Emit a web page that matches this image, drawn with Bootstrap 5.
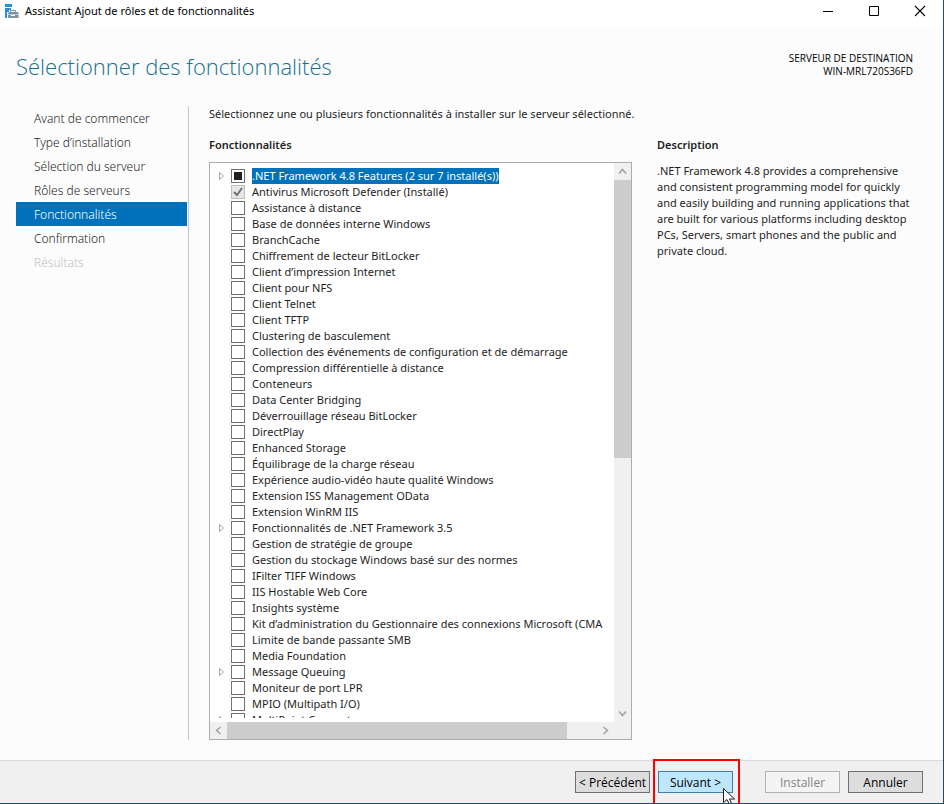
<!DOCTYPE html>
<html lang="fr">
<head>
<meta charset="utf-8">
<meta name="viewport" content="width=device-width, initial-scale=1">
<title>Assistant Ajout de rôles et de fonctionnalités</title>
<link href="https://cdn.jsdelivr.net/npm/bootstrap@5.3.0/dist/css/bootstrap.min.css" rel="stylesheet">
<style>
body { font-family: "Noto Sans", "Open Sans", sans-serif; font-size: 11px; line-height: 16px; color: #1e1e1e; }
.wizard { background: #fcfcfc; border-right: 1px solid #1f4e66; border-bottom: 1px solid #1f4e66; }
.titlebar { height: 27px; background: #fff; color: #000; padding: 0 0 5px 4px; gap: 6px; }
.caption-btn { width: 46px; height: 22px; border: 0; background: none; padding: 0; color: #000; display: grid; place-items: center; }
.page-head { padding: 23px 30px 0 16px; height: 79px; }
.page-title { font-family: "Open Sans", sans-serif; font-size: 22px; line-height: 32px; font-weight: 300; color: #16708f; margin: 0; }
.server-info { font-family: "Open Sans", sans-serif; font-size: 10px; line-height: 13px; color: #000; padding-top: 2px; }
.steps { width: 173px; margin-left: 16px; border-right: 1px solid #c8c8c8; padding: 0 1px 0 0; }
.steps .nav-link { font-size: 12px; line-height: 22px; font-weight: 300; color: #1e1e1e; padding: 2px 0 0 18px; border-radius: 0; }
.steps .nav-link.active { background: #0072bc; color: #fff; }
.steps .nav-link.disabled { color: #bfbfbf; }
.picker { padding: 0 0 0 20px; }
.section-row { padding-top: 15px; }
.section-title { font-size: 11px; line-height: 16px; font-weight: 600; margin: 0 0 9px; }
.side { width: 311px; padding: 0 24px 0 25px; }
.desc-text { padding-top: 1px; }
.tree-box { background: #fff; border: 1px solid #acacac; }
.tree-pane { padding: 5px 0 4px 8px; }
.feature { height: 16px; }
.twist { width: 7px; height: 16px; margin-right: 6px; padding: 0; border: 0; background: none; }
.twist svg { display: block; }
.tick { appearance: none; width: 14px; height: 14px; flex: none; margin: 0 7px 0 0; border: 1px solid #707070; background: #fff; }
.tick:indeterminate { background: linear-gradient(#212121, #212121) center / 8px 8px no-repeat #fff; }
.tick:disabled { border-color: #bcbcbc; background: #e6e6e6 url("data:image/svg+xml,%3Csvg xmlns='http://www.w3.org/2000/svg' viewBox='0 0 12 12'%3E%3Cpath d='M2 6l3 3 5-7' fill='none' stroke='%23707070' stroke-width='2'/%3E%3C/svg%3E") center no-repeat; }
.feature-name { white-space: nowrap; line-height: 16px; }
.feature-name.picked { background: #0072bc; color: #fff; }
.v-bar { width: 17px; background: #f0f0f0; }
.h-bar { height: 17px; background: #f0f0f0; }
.thumb { background: #cdcdcd; }
.bar-btn { width: 17px; height: 17px; flex: none; border: 0; padding: 0; background: #f0f0f0; display: grid; place-items: center; }
.v-thumb { height: 53%; }
.h-thumb { width: 92%; }
.actions { background: #f0f0f0; border-top: 1px solid #dadada; height: 43px; padding: 10px 20px 0 0; margin-top: 20px; }
.wiz-btn { font-family: "Open Sans", sans-serif; width: 75px; height: 22px; font-size: 12px; line-height: 16px; padding: 2px 0 0; border: 1px solid #707070; border-radius: 0; background: #ddd; color: #000; white-space: nowrap; }
.wiz-btn.hot { background: #bee6fd; border-color: #3c7fb1; }
.wiz-btn:disabled { background: #f4f4f4; border-color: #adb2b5; color: #838383; opacity: 1; }
.end-group { margin-left: 32px; }
.focus-frame { position: absolute; inset: -12px -7px -10px -5px; border: 2px solid #f00; pointer-events: none; }
.pointer { position: absolute; left: 64px; top: 17px; pointer-events: none; }
</style>
<script src="https://cdn.jsdelivr.net/npm/bootstrap@5.3.0/dist/js/bootstrap.bundle.min.js"></script>
</head>
<body>
<div class="wizard vh-100 d-flex flex-column overflow-hidden">
  <header class="titlebar d-flex align-items-center flex-shrink-0">
    <svg width="15" height="15" viewBox="0 0 15 15" aria-hidden="true">
      <path d="M1 0h7v3H1zM1 4h6v2H5v2H3v6H1z" fill="#2b8dd8"/>
      <path d="M6.500 8.500v-2h5v2" fill="none" stroke="#7893a8"/>
      <path d="M5 8h9l1 2.500H3.500z" fill="#7893a8"/>
      <path d="M4 11h3v1h4v-1h3.500v3H4z" fill="#7893a8"/>
    </svg>
    <span class="flex-grow-1">Assistant Ajout de rôles et de fonctionnalités</span>
    <div class="d-flex">
      <button class="caption-btn" type="button" aria-label="Réduire"><svg width="12" height="12"><path d="M1 6.500h10" stroke="#000"/></svg></button>
      <button class="caption-btn" type="button" aria-label="Agrandir"><svg width="12" height="12"><path d="M1.500 1.500h9v9h-9z" fill="none" stroke="#000"/></svg></button>
      <button class="caption-btn" type="button" aria-label="Fermer"><svg width="12" height="12"><path d="M1 1l10 10M11 1L1 11" stroke="#000" stroke-width="1.100"/></svg></button>
    </div>
  </header>
  <div class="page-head d-flex justify-content-between flex-shrink-0">
    <h1 class="page-title">Sélectionner des fonctionnalités</h1>
    <div class="server-info text-end">SERVEUR DE DESTINATION<br>WIN-MRL720S36FD</div>
  </div>
  <main class="d-flex flex-fill overflow-hidden">
    <nav class="steps nav flex-column flex-nowrap flex-shrink-0" aria-label="Étapes">
      <a class="nav-link" href="#">Avant de commencer</a>
      <a class="nav-link" href="#">Type d’installation</a>
      <a class="nav-link" href="#">Sélection du serveur</a>
      <a class="nav-link" href="#">Rôles de serveurs</a>
      <a class="nav-link active" href="#" aria-current="step">Fonctionnalités</a>
      <a class="nav-link" href="#">Confirmation</a>
      <a class="nav-link disabled" href="#" aria-disabled="true">Résultats</a>
    </nav>
    <div class="d-flex flex-column flex-fill overflow-hidden">
      <p class="picker text-nowrap mb-0">Sélectionnez une ou plusieurs fonctionnalités à installer sur le serveur sélectionné.</p>
      <div class="section-row d-flex flex-fill overflow-hidden">
        <section class="picker d-flex flex-column flex-fill overflow-hidden">
          <h2 class="section-title">Fonctionnalités</h2>
          <div class="tree-box d-flex flex-column flex-fill overflow-hidden">
            <div class="d-flex flex-fill overflow-hidden">
              <div class="tree-pane flex-fill overflow-hidden">
                <div class="h-100 overflow-hidden" id="features"></div>
              </div>
              <div class="v-bar d-flex flex-column flex-shrink-0">
                <button class="bar-btn" type="button" aria-label="Défiler vers le haut"><svg width="9" height="9"><path d="M1 6.500L4.500 2.500 8 6.500" fill="none" stroke="#a0a0a0" stroke-width="1.500"/></svg></button>
                <div class="flex-fill"><div class="thumb v-thumb"></div></div>
                <button class="bar-btn" type="button" aria-label="Défiler vers le bas"><svg width="9" height="9"><path d="M1 2.500L4.500 6.500 8 2.500" fill="none" stroke="#a0a0a0" stroke-width="1.500"/></svg></button>
              </div>
            </div>
            <div class="h-bar d-flex flex-shrink-0">
              <button class="bar-btn" type="button" aria-label="Défiler vers la gauche"><svg width="9" height="9"><path d="M6.500 1L2.500 4.500 6.500 8" fill="none" stroke="#a0a0a0" stroke-width="1.500"/></svg></button>
              <div class="flex-fill"><div class="thumb h-thumb h-100"></div></div>
              <button class="bar-btn" type="button" aria-label="Défiler vers la droite"><svg width="9" height="9"><path d="M2.500 1L6.500 4.500 2.500 8" fill="none" stroke="#a0a0a0" stroke-width="1.500"/></svg></button>
              <div class="v-bar"></div>
            </div>
          </div>
        </section>
        <aside class="side flex-shrink-0">
          <h2 class="section-title">Description</h2>
          <p class="mb-0 desc-text">.NET Framework 4.8 provides a comprehensive and consistent programming model for quickly and easily building and running applications that are built for various platforms including desktop PCs, Servers, smart phones and the public and private cloud.</p>
        </aside>
      </div>
    </div>
  </main>
  <footer class="actions d-flex justify-content-end flex-shrink-0">
    <button class="btn wiz-btn" type="button">&lt; Précédent</button>
    <div class="position-relative ms-2">
      <button class="btn wiz-btn hot" type="button">Suivant &gt;</button>
      <span class="focus-frame"></span>
      <svg class="pointer" width="13" height="16" viewBox="0 0 13 16" aria-hidden="true"><path d="M1.500.500v14l3.500-3 2.500 5 2-1-2-4.500h5z" fill="#fff" stroke="#1a1a2a"/></svg>
    </div>
    <div class="end-group d-flex gap-2">
      <button class="btn wiz-btn" type="button" disabled>Installer</button>
      <button class="btn wiz-btn" type="button">Annuler</button>
    </div>
  </footer>
</div>
<script>
const names = [
  "+.NET Framework 4.8 Features (2 sur 7 installé(s))", "Antivirus Microsoft Defender (Installé)", "Assistance à distance",
  "Base de données interne Windows", "BranchCache", "Chiffrement de lecteur BitLocker", "Client d’impression Internet",
  "Client pour NFS", "Client Telnet", "Client TFTP", "Clustering de basculement",
  "Collection des événements de configuration et de démarrage", "Compression différentielle à distance", "Conteneurs",
  "Data Center Bridging", "Déverrouillage réseau BitLocker", "DirectPlay", "Enhanced Storage", "Équilibrage de la charge réseau",
  "Expérience audio-vidéo haute qualité Windows", "Extension ISS Management OData", "Extension WinRM IIS",
  "+Fonctionnalités de .NET Framework 3.5", "Gestion de stratégie de groupe", "Gestion du stockage Windows basé sur des normes",
  "IFilter TIFF Windows", "IIS Hostable Web Core", "Insights système",
  "Kit d’administration du Gestionnaire des connexions Microsoft (CMA", "Limite de bande passante SMB", "Media Foundation",
  "+Message Queuing", "Moniteur de port LPR", "MPIO (Multipath I/O)", "+MultiPoint Connector"
];
const arrow = '<svg width="7" height="16"><path d="M1.500 4.500v7l4-3.500z" fill="#fff" stroke="#a6a6a6"/></svg>';
const list = document.getElementById("features");
names.forEach((raw, i) => {
  const branch = raw[0] === "+";
  const name = branch ? raw.slice(1) : raw;
  const row = document.createElement("div");
  row.className = "feature d-flex align-items-center";
  row.innerHTML = (branch ? `<button class="twist flex-shrink-0" type="button" aria-label="Développer ${name}">${arrow}</button>` : '<span class="twist flex-shrink-0"></span>')
    + `<input class="tick" type="checkbox" id="f${i}"${i === 1 ? " checked disabled" : ""}>`
    + `<label class="feature-name${i === 0 ? " picked" : ""}" for="f${i}">${name}</label>`;
  list.append(row);
});
document.getElementById("f0").indeterminate = true;
</script>
</body>
</html>
